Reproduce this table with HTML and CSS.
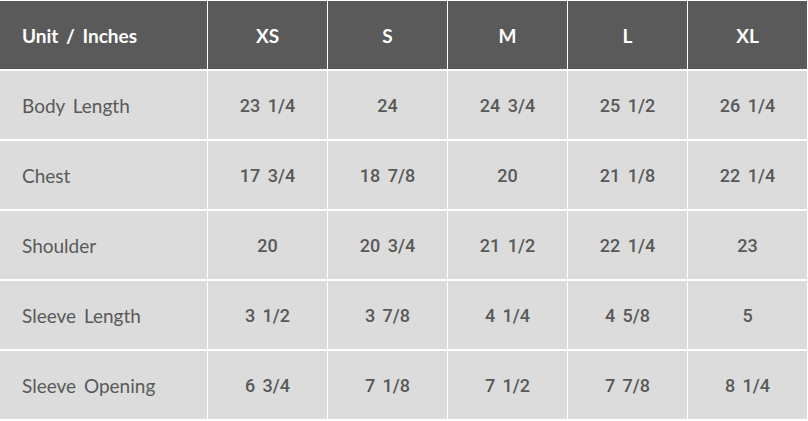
FILE: index.html
```html
<!DOCTYPE html>
<html>
<head>
<meta charset="utf-8">
<link rel="stylesheet" href="styles.css">
</head>
<body>
<div class="chart">
  <div class="cell head label">Unit / Inches</div>
  <div class="cell head">XS</div>
  <div class="cell head">S</div>
  <div class="cell head">M</div>
  <div class="cell head">L</div>
  <div class="cell head">XL</div>

  <div class="cell label">Body Length</div>
  <div class="cell">23 1/4</div>
  <div class="cell">24</div>
  <div class="cell">24 3/4</div>
  <div class="cell">25 1/2</div>
  <div class="cell">26 1/4</div>

  <div class="cell label">Chest</div>
  <div class="cell">17 3/4</div>
  <div class="cell">18 7/8</div>
  <div class="cell">20</div>
  <div class="cell">21 1/8</div>
  <div class="cell">22 1/4</div>

  <div class="cell label">Shoulder</div>
  <div class="cell">20</div>
  <div class="cell">20 3/4</div>
  <div class="cell">21 1/2</div>
  <div class="cell">22 1/4</div>
  <div class="cell">23</div>

  <div class="cell label">Sleeve Length</div>
  <div class="cell">3 1/2</div>
  <div class="cell">3 7/8</div>
  <div class="cell">4 1/4</div>
  <div class="cell">4 5/8</div>
  <div class="cell">5</div>

  <div class="cell label">Sleeve Opening</div>
  <div class="cell">6 3/4</div>
  <div class="cell">7 1/8</div>
  <div class="cell">7 1/2</div>
  <div class="cell">7 7/8</div>
  <div class="cell">8 1/4</div>
</div>
</body>
</html>
```
FILE: styles.css
```css
html, body {
  margin: 0;
  padding: 0;
  background: #ffffff;
}
.chart {
  display: grid;
  grid-template-columns: 207px repeat(5, 119px);
  grid-template-rows: 68px repeat(5, 68px);
  column-gap: 1px;
  row-gap: 2px;
  padding-top: 1px;
  width: 807px;
}
.cell {
  background: #dcdcdc;
  color: #595959;
  display: flex;
  align-items: center;
  justify-content: center;
  font-family: Roboto, "Liberation Sans", sans-serif;
  font-weight: 500;
  font-size: 18px;
  word-spacing: 3px;
}
.cell.label {
  justify-content: flex-start;
  padding-left: 22px;
  font-family: Lato, "Liberation Sans", sans-serif;
  font-weight: 400;
  font-size: 19px;
  word-spacing: 3px;
}
.cell.head {
  background: #5a5a5a;
  color: #ffffff;
  font-family: Lato, "Liberation Sans", sans-serif;
  font-weight: 700;
  font-size: 19px;
}
```
